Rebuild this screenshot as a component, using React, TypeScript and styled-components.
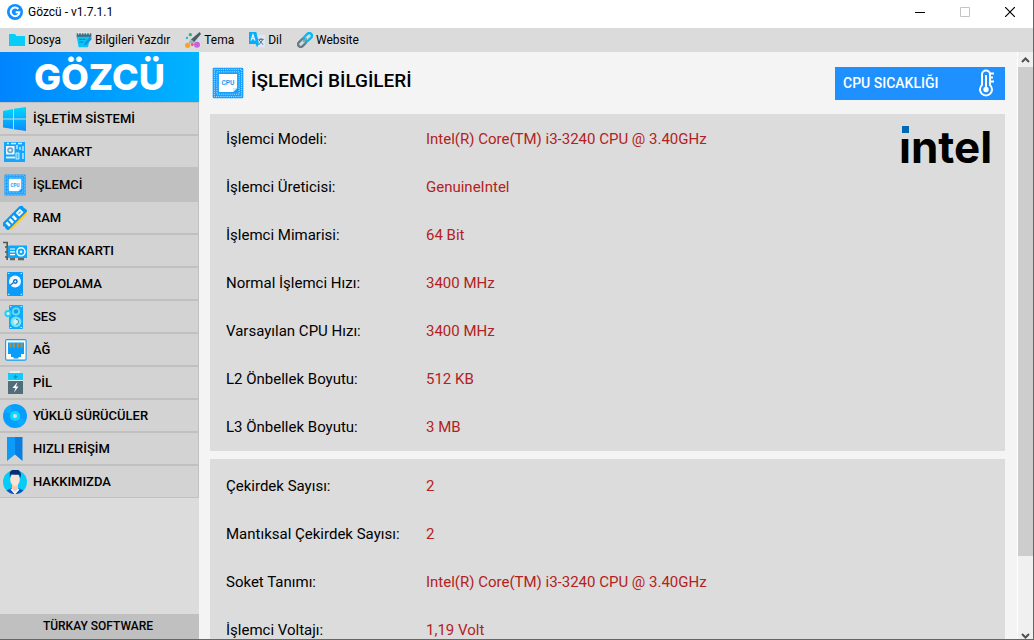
import React from "react";
import styled, { createGlobalStyle } from "styled-components";

const din = `Roboto, "Liberation Sans", sans-serif`;

const GlobalStyle = createGlobalStyle`
  *, *::before, *::after { box-sizing: border-box; }
  body { margin: 0; overflow: hidden; }
  button { border: 0; margin: 0; padding: 0; background: none; color: inherit; font: inherit; cursor: pointer; }
  svg { display: block; flex: none; }
`;

const Shell = styled.div`
  display: flex;
  flex-direction: column;
  height: 100vh;
  border-right: 1px solid #666;
  border-bottom: 1px solid #666;
  background: #f4f4f4;
  color: #000;
  font-family: ${din};
`;

const TitleBar = styled.header`
  display: flex;
  align-items: center;
  flex: none;
  height: 28px;
  padding: 0 1px 4px 7px;
  background: #fff;
  font: 12px/16px "Noto Sans", sans-serif;
`;

const WindowTitle = styled.span`
  flex: 1;
  padding-left: 5px;
  font: 12px/16px ${din};
`;

const WindowButton = styled.button`
  display: grid;
  place-items: center;
  width: 45px;
  height: 24px;
`;

const MenuBar = styled.nav`
  display: flex;
  align-items: center;
  flex: none;
  gap: 8px;
  height: 24px;
  padding-left: 9px;
  background: #dbdbdb;
`;

const MenuButton = styled.button`
  display: flex;
  align-items: center;
  gap: 3px;
  padding-right: 7px;
  font: 12px/16px ${din};
`;

const Body = styled.div`
  display: flex;
  flex: 1;
  min-height: 0;
`;

const Sidebar = styled.aside`
  display: flex;
  flex-direction: column;
  flex: none;
  width: 199px;
  background: #dcdcdc;
`;

const Brand = styled.div`
  flex: none;
  height: 50px;
  background: linear-gradient(90deg, #0084ff, #00b4ff);
  color: #fff;
  font: 800 36px/50px Inter, sans-serif;
  text-align: center;
`;

const NavButton = styled.button<{ $active: boolean }>`
  display: flex;
  align-items: center;
  gap: 6px;
  width: 100%;
  height: 33px;
  padding-left: 3px;
  border: solid #c0c0c0;
  border-width: 1px 1px 1px 0;
  background: ${(p) => (p.$active ? "#c0c0c0" : "#d3d3d3")};
  font: 500 13px/16px ${din};
`;

const SidebarFooter = styled.footer`
  margin-top: auto;
  padding-right: 3px;
  background: #c0c0c0;
  font: 500 12px/25px ${din};
  text-align: center;
`;

const Main = styled.main`
  flex: 1;
  min-width: 0;
  padding: 0 12px 0 11px;
  overflow: hidden;
`;

const PageHeader = styled.div`
  display: flex;
  align-items: center;
  height: 62px;
  padding-left: 2px;
`;

const PageTitle = styled.h1`
  flex: 1;
  margin: 0;
  padding: 0 0 4px 7px;
  font: 500 19px/24px ${din};
`;

const TemperatureButton = styled.button`
  display: flex;
  align-items: center;
  justify-content: space-between;
  width: 170px;
  height: 33px;
  padding: 0 9px 0 8px;
  background: #1e90ff;
  color: #fff;
  font: 500 14px/20px ${din};
`;

const Panel = styled.section`
  display: flex;
  justify-content: space-between;
  align-items: flex-start;
  margin-bottom: 8px;
  padding: 1px 12px 0 16px;
  background: #dcdcdc;

  & + & { padding-top: 3px; }
`;

const Specs = styled.dl`
  margin: 0;
`;

const SpecRow = styled.div`
  display: grid;
  grid-template-columns: 200px 1fr;
  height: 48px;
  font: 15px/48px ${din};
  white-space: nowrap;
`;

const SpecName = styled.dt``;

const SpecValue = styled.dd`
  margin: 0;
  color: #b22222;
`;

const ScrollTrack = styled.div`
  display: flex;
  flex-direction: column;
  flex: none;
  width: 16px;
  border-left: 1px solid #fff;
  background: #f0f0f0;
`;

const ScrollThumb = styled.div`
  flex: 489;
  background: #cdcdcd;
`;

const ScrollRest = styled.div`
  flex: 68;
`;

const ScrollButton = styled.button<{ $end?: boolean }>`
  display: grid;
  place-items: ${(p) => (p.$end ? "end center" : "center")};
  height: 15px;
  flex: none;
`;

type Draw = React.ReactNode;
const Icon = ({ size = 24, children }: { size?: number; children: Draw }) => (
  <svg width={size} height={size} viewBox="0 0 24 24" fill="none" aria-hidden="true">{children}</svg>
);

const CpuDrawing = () => (
  <>
    <rect x=".5" y=".5" width="23" height="23" rx="1" fill="#159fff" />
    <rect x="1.8" y="1.8" width="20.4" height="20.4" stroke="#bde6ff" strokeWidth=".7" strokeDasharray=".8 .8" />
    <rect x="3.6" y="3.6" width="16.8" height="16.8" stroke="#bde6ff" strokeWidth=".7" strokeDasharray=".8 .8" />
    <path d="M5.200 5.200h13.600v10.600l-3 3H5.200z" fill="#fff" />
    <path d="M18.800 15.800l-3 3v-3z" fill="#cdeaff" />
    <text x="12" y="13.700" fontSize="5" fontWeight="700" fontFamily="Roboto, sans-serif" textAnchor="middle" fill="#1d9cf0">CPU</text>
  </>
);

const navIcons: Record<string, Draw> = {
  windows: (
    <>
      <defs><linearGradient id="win" x1="0" y1="0" x2="0" y2="1"><stop stopColor="#00d8fb" /><stop offset="1" stopColor="#0a8cff" /></linearGradient></defs>
      <path d="M0 4l10-2v9.6H0zM11 1.8L23 0v11.6H11zM0 12.5h10V22L0 20.5zM11 12.5h12V24l-12-1.8z" fill="url(#win)" />
    </>
  ),
  board: (
    <>
      <rect x="1" y="2" width="21" height="20" fill="#14a5ff" />
      <rect x="3" y="6" width="8.500" height="8.500" fill="#eef8ff" />
      <circle cx="7.200" cy="10.200" r="3" fill="#6fa3bd" /><circle cx="7.200" cy="10.200" r="1.300" fill="#e8f7ff" />
      <path d="M4 3.500h2M8 3.500h5M15 3.500h4" stroke="#d6f1ff" strokeWidth="1.300" />
      <path d="M14 5v4M20 6v5M20 13v6M17 7v3" stroke="#d6f1ff" strokeWidth="1.300" />
      <path d="M3 17.500h9" stroke="#fff3cf" strokeWidth="1.800" />
      <rect x="13" y="13" width="3" height="6" fill="#37c4ff" stroke="#fff" strokeWidth=".7" />
    </>
  ),
  cpu: (
    <g transform="translate(1 1) scale(.92)"><CpuDrawing /></g>
  ),
  ram: (
    <g transform="rotate(-45 12 12)">
      <path d="M-1.500 15.500h27v2.300h-27z" fill="#ffc928" />
      <path d="M-2 6.800h28v2.800q-1.400 1.400 0 2.800v3.500H-2v-3.500q1.400-1.400 0-2.800z" fill="#0b96f5" />
      <path d="M1.500 9h2.600v5H1.500zM6 9h2.600v5H6zM10.500 9h2.600v5h-2.600zM16 9h6v5h-6z" fill="#f3fbff" />
      <path d="M17.500 11.500h3" stroke="#3aaeff" strokeWidth="1.200" />
    </g>
  ),
  gpu: (
    <>
      <path d="M0 3.500h4.200V21" stroke="#555" strokeWidth="1.600" />
      <path d="M2 8h2M2 13h2M2 18h2" stroke="#555" strokeWidth="1.400" />
      <path d="M7 20h5M15 20h6" stroke="#666" strokeWidth="2.400" />
      <rect x="4.600" y="6.500" width="21" height="12.500" rx="1.500" fill="#0ba9fb" />
      <path d="M7 10h5M7 12.800h5M7 15.600h5" stroke="#fff" strokeWidth="1.200" />
      <circle cx="18" cy="12.800" r="4" stroke="#fff" strokeWidth="1.500" /><circle cx="18" cy="12.800" r="1.300" fill="#fff" />
    </>
  ),
  disk: (
    <>
      <rect x="4" y="0" width="16" height="24" rx="1" fill="#0b9bf8" />
      <circle cx="12" cy="9.500" r="6" fill="#effaff" />
      <circle cx="12.300" cy="9.500" r="2.400" fill="#0b6fc4" /><circle cx="12.300" cy="9.500" r="1" fill="#fff" />
      <path d="M7 13.500l3.500-3" stroke="#0b85e5" strokeWidth="1.500" />
      <path d="M5 1.500h1.400M17.600 1.500H19M5 22.300h1.400M17.600 22.300H19" stroke="#c8edff" strokeWidth="1.200" />
    </>
  ),
  speaker: (
    <>
      <rect x="6" y="0" width="14" height="24" rx="1" fill="#12aafc" />
      <circle cx="13" cy="6.400" r="4" fill="#62def5" /><circle cx="13" cy="6.400" r="2.200" fill="#139fe6" />
      <circle cx="13" cy="16.800" r="5.400" fill="#75e5f5" /><circle cx="13" cy="16.800" r="2.600" fill="#c8f2fa" />
      <path d="M13 14.200a2.600 2.600 0 010 5.200" stroke="#528ba3" />
      <circle cx="5" cy="8.600" r="3.600" fill="#24d0f2" /><circle cx="5" cy="8.600" r="1.500" fill="#dff9ff" />
      <path d="M7.200 1.600h1.200M17.600 1.600h1.200M7.200 22.500h1.200M17.600 22.500h1.200" stroke="#fff" />
    </>
  ),
  network: (
    <>
      <rect x="2.600" y="1.600" width="20.500" height="20.500" rx="1.300" fill="#fffdf2" stroke="#179cf0" strokeWidth="1.100" />
      <path d="M5 4.500h16v11.500h-3v3h-2.500v1.500h-5V19H8v-3H5z" fill="#0b9dfc" />
      <path d="M7.500 5v4.500M11 5v4.500M15 5v4.500M18.500 5v4.500" stroke="#a8904a" strokeWidth="2.200" />
    </>
  ),
  battery: (
    <>
      <path d="M7 1h10" stroke="#e8fbff" strokeWidth="1.500" />
      <rect x="5" y="2" width="15" height="7.500" fill="#10cbfb" />
      <path d="M12.500 3.800v4M10.500 5.800h4" stroke="#168eac" strokeWidth="1.200" />
      <path d="M5 9.500h15v13.500H5z" fill="#526d7a" /><path d="M5 9.500h15" stroke="#d9eef3" />
      <path d="M14.500 11l-5 6h3l-1.500 4.500 4.500-6h-2.500z" fill="#fff" />
    </>
  ),
  disc: (
    <>
      <circle cx="12" cy="12" r="12" fill="#059fff" />
      <path d="M12 12L1 7.500A12 12 0 017 1zM12 12l11 4.500a12 12 0 01-6 6.500z" fill="#0faaff" />
      <circle cx="12" cy="12" r="5" fill="#12d6fa" /><circle cx="12" cy="12" r="2" fill="#d8dedf" />
    </>
  ),
  bookmark: (
    <>
      <path d="M4 0h8v17.500l-8 6.500z" fill="#0b9bf8" /><path d="M12 0h7.500v24L12 17.500z" fill="#087fe0" />
    </>
  ),
  person: (
    <>
      <defs><clipPath id="face"><circle cx="12" cy="12" r="12" /></clipPath></defs>
      <circle cx="12" cy="12" r="12" fill="#08ccf7" />
      <g clipPath="url(#face)">
        <path d="M2 25c0-5 4-6 8-7h4c4 1 8 2 8 7z" fill="#0b54bd" />
        <path d="M9 14h6v4.500L12 22l-3-3.500z" fill="#f4c9b1" />
        <path d="M9 18.500l3 3 3-3 1.500 1-4.500 5-4.500-5z" fill="#f5fbff" />
      </g>
      <ellipse cx="12" cy="9.500" rx="4.800" ry="6.500" fill="#fbe3d4" />
      <path d="M6.800 8V3C7-1 16-2 17 2c1.500 1 .8 4 .2 6l-1.200-3.500c-3 1-6-.5-8 0z" fill="#062e77" />
    </>
  ),
};

const navItems = [
  ["İŞLETİM SİSTEMİ", "windows"], ["ANAKART", "board"], ["İŞLEMCİ", "cpu"], ["RAM", "ram"],
  ["EKRAN KARTI", "gpu"], ["DEPOLAMA", "disk"], ["SES", "speaker"], ["AĞ", "network"],
  ["PİL", "battery"], ["YÜKLÜ SÜRÜCÜLER", "disc"], ["HIZLI ERİŞİM", "bookmark"], ["HAKKIMIZDA", "person"],
];

const menuItems: [string, Draw][] = [
  ["Dosya", <path d="M0 3h9l2 3h13v15H0z" fill="#08cdf6" />],
  ["Bilgileri Yazdır", (
    <>
      <path d="M1 2h22v6H1z" fill="#45697c" /><path d="M1 7h20l-3 16H4z" fill="#08c5f5" />
      <path d="M4 0v4M8 0v4M12 0v4M16 0v4M20 0v4" stroke="#dff3f8" strokeWidth="1.300" />
      <path d="M5 11h9M5 15h6" stroke="#087cab" strokeWidth="1.500" /><path d="M12 20l1-4 8-9 3 3-8 9z" fill="#1597df" />
    </>
  )],
  ["Tema", (
    <>
      <path d="M22 0l2 3-11 13-5-4z" fill="#456069" /><path d="M9 11l5 4-2 4-7-3z" fill="#9eb4b9" />
      <circle cx="4" cy="20" r="4" fill="#ffa126" /><circle cx="18" cy="19" r="4.500" fill="#c961df" />
      <circle cx="8" cy="4" r="2.500" fill="#24b476" /><circle cx="3" cy="9" r="1.700" fill="#1fb5ca" /><circle cx="11" cy="19" r="2" fill="#ee4d74" />
    </>
  )],
  ["Dil", (
    <>
      <path d="M9 5h15v18H11z" fill="#dce8f8" /><path d="M0 0h11l4 18-3 5-2-5H0z" fill="#08aefa" />
      <path d="M3 13l3-9 3 9M4 10h4" stroke="#fff" strokeWidth="1.600" />
      <path d="M14 11h8M18 9v2M21 11l-6 8M15 12l6 7" stroke="#587080" strokeWidth="1.500" />
    </>
  )],
  ["Website", (
    <g transform="rotate(-45 12 12)" strokeWidth="3.500">
      <rect x="-1" y="8" width="14" height="8" rx="4" stroke="#627d88" /><rect x="11" y="8" width="14" height="8" rx="4" stroke="#08b8ef" />
      <path d="M8 12h8" stroke="#8ea7b0" strokeWidth="2.500" />
    </g>
  )],
];

const generalSpecs = [
  ["İşlemci Modeli:", "Intel(R) Core(TM) i3-3240 CPU @ 3.40GHz"],
  ["İşlemci Üreticisi:", "GenuineIntel"],
  ["İşlemci Mimarisi:", "64 Bit"],
  ["Normal İşlemci Hızı:", "3400 MHz"],
  ["Varsayılan CPU Hızı:", "3400 MHz"],
  ["L2 Önbellek Boyutu:", "512 KB"],
  ["L3 Önbellek Boyutu:", "3 MB"],
];

const coreSpecs = [
  ["Çekirdek Sayısı:", "2"],
  ["Mantıksal Çekirdek Sayısı:", "2"],
  ["Soket Tanımı:", "Intel(R) Core(TM) i3-3240 CPU @ 3.40GHz"],
  ["İşlemci Voltajı:", "1,19 Volt"],
];

const SpecList = ({ rows }: { rows: string[][] }) => (
  <Specs>
    {rows.map(([name, value]) => (
      <SpecRow key={name}><SpecName>{name}</SpecName><SpecValue>{value}</SpecValue></SpecRow>
    ))}
  </Specs>
);

const IntelLogo = () => (
  <svg width="98" height="64" viewBox="0 0 98 64" role="img" aria-label="intel">
    <text x="4" y="48" fontFamily="Inter, sans-serif" fontWeight="700" fontSize="44" fill="#000">intel</text>
    <rect x="5" y="8" width="11" height="14" fill="#dcdcdc" />
    <rect x="7" y="11" width="7" height="7" fill="#0068b5" />
  </svg>
);

const Thermometer = () => (
  <svg width="17" height="28" viewBox="0 0 17 28" fill="none" stroke="#fff" aria-hidden="true">
    <path d="M3 16V5.500a4 4 0 018 0V16a6 6 0 11-8 0z" strokeWidth="2" />
    <path d="M7 6v14" strokeWidth="2" /><circle cx="7" cy="20.500" r="2.700" fill="#fff" stroke="none" />
    <path d="M11 4.500h4M11 8.500h3M11 12.500h4" strokeWidth="2" />
  </svg>
);

export default function App() {
  return (
    <Shell lang="tr">
      <GlobalStyle />
      <TitleBar>
        <Icon size={16}>
          <circle cx="12" cy="12" r="12" fill="#128eff" />
          <path d="M17 7.500a6.500 6.500 0 101.500 5H13" stroke="#fff" strokeWidth="3" />
        </Icon>
        <WindowTitle>Gözcü - v1.7.1.1</WindowTitle>
        <WindowButton aria-label="Simge durumuna küçült">
          <svg width="10" height="10"><path d="M0 5.500h10" stroke="#000" /></svg>
        </WindowButton>
        <WindowButton aria-label="Ekranı kapla" disabled>
          <svg width="10" height="10" fill="none"><path d="M.5.5h9v9h-9z" stroke="#c4c4c4" /></svg>
        </WindowButton>
        <WindowButton aria-label="Kapat">
          <svg width="10" height="10"><path d="M0 0l10 10M10 0L0 10" stroke="#000" strokeWidth="1.200" /></svg>
        </WindowButton>
      </TitleBar>
      <MenuBar>
        {menuItems.map(([label, drawing]) => (
          <MenuButton key={label}><Icon size={16}>{drawing}</Icon>{label}</MenuButton>
        ))}
      </MenuBar>
      <Body>
        <Sidebar>
          <Brand>GÖZCÜ</Brand>
          <nav>
            {navItems.map(([label, icon]) => (
              <NavButton key={label} $active={icon === "cpu"}><Icon>{navIcons[icon]}</Icon>{label}</NavButton>
            ))}
          </nav>
          <SidebarFooter>TÜRKAY SOFTWARE</SidebarFooter>
        </Sidebar>
        <Main>
          <PageHeader>
            <Icon size={32}><CpuDrawing /></Icon>
            <PageTitle>İŞLEMCİ BİLGİLERİ</PageTitle>
            <TemperatureButton>CPU SICAKLIĞI<Thermometer /></TemperatureButton>
          </PageHeader>
          <Panel><SpecList rows={generalSpecs} /><IntelLogo /></Panel>
          <Panel><SpecList rows={coreSpecs} /></Panel>
        </Main>
        <ScrollTrack>
          <ScrollButton aria-label="Yukarı kaydır">
            <svg width="9" height="6" fill="none"><path d="M1 5l3.500-3.500L8 5" stroke="#505050" strokeWidth="2" /></svg>
          </ScrollButton>
          <ScrollThumb />
          <ScrollRest />
          <ScrollButton $end aria-label="Aşağı kaydır">
            <svg width="9" height="6" fill="none"><path d="M1 1l3.500 3.500L8 1" stroke="#505050" strokeWidth="2" /></svg>
          </ScrollButton>
        </ScrollTrack>
      </Body>
    </Shell>
  );
}
